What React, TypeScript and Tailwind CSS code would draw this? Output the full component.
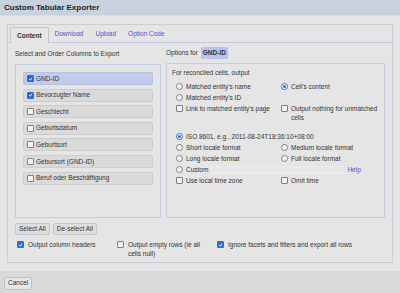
import React from "react";

type ColumnItem = { name: string; checked: boolean; selected?: boolean };

const columns: ColumnItem[] = [
  { name: "GND-ID", checked: true, selected: true },
  { name: "Bevorzugter Name", checked: true },
  { name: "Geschlecht", checked: false },
  { name: "Geburtsdatum", checked: false },
  { name: "Geburtsort", checked: false },
  { name: "Gebursort (GND-ID)", checked: false },
  { name: "Beruf oder Beschäftigung", checked: false },
];

function Check({ checked }: { checked?: boolean }) {
  return checked ? (
    <span className="w-[7px] h-[7px] shrink-0 rounded-[1px] bg-[#2f6bd3] border border-[#2f6bd3] flex items-center justify-center">
      <svg viewBox="0 0 10 10" className="w-[6px] h-[6px]">
        <path d="M2 5.2 L4.2 7.4 L8.2 2.6" fill="none" stroke="#fff" strokeWidth="1.8" />
      </svg>
    </span>
  ) : (
    <span className="block w-[7px] h-[7px] shrink-0 rounded-[1px] bg-[#f4f4f4] border border-[#808080]" />
  );
}

function Radio({ checked }: { checked?: boolean }) {
  return checked ? (
    <span className="w-[7px] h-[7px] shrink-0 rounded-full bg-white border border-[#2f6bd3] flex items-center justify-center">
      <span className="block w-[3px] h-[3px] rounded-full bg-[#2f6bd3]" />
    </span>
  ) : (
    <span className="block w-[7px] h-[7px] shrink-0 rounded-full bg-[#f4f4f4] border border-[#808080]" />
  );
}

function Opt({ kind, checked, children }: { kind: "radio" | "check"; checked?: boolean; children: React.ReactNode }) {
  return (
    <div className="flex items-start gap-[3px] h-[11px]">
      <span className="flex mt-[1px]">{kind === "radio" ? <Radio checked={checked} /> : <Check checked={checked} />}</span>
      <span className="leading-[9px]">{children}</span>
    </div>
  );
}

export default function App() {
  return (
    <div className="w-[400px] h-[293px] bg-[#e5e5e5] flex flex-col text-[6.5px] text-[#333] font-['Liberation_Sans',Arial,sans-serif] overflow-hidden">
      <div className="h-[16px] bg-[#c8d2de] px-[4px] flex items-center border-b border-[#d6dce6]">
        <span className="text-[8px] font-bold text-[#222]">Custom Tabular Exporter</span>
      </div>

      <div className="flex-1 px-[7px] pt-[8px] pb-[8px]">
        <div className="h-full border border-[#c9ccdc] flex flex-col">
          <div className="h-[18px] flex items-end pl-[2px] border-b border-[#c4c8de]">
            <div className="h-[16px] px-[6px] flex items-center border border-b-0 border-[#c6c6c6] bg-[#e5e5e5] font-bold -mb-px">Content</div>
            <div className="h-[16px] px-[6px] flex items-center text-[#5a4fc8]">Download</div>
            <div className="h-[16px] px-[6px] flex items-center text-[#5a4fc8]">Upload</div>
            <div className="h-[16px] px-[6px] flex items-center text-[#5a4fc8]">Option Code</div>
          </div>

          <div className="flex-1 px-[7px] flex flex-col">
            <div className="flex gap-[5px]">
              <div className="w-[146px] flex flex-col">
                <div className="h-[21px] flex items-center">Select and Order Columns to Export</div>
                <div className="h-[154px] border border-[#c7cbe2] px-[7px] pt-[7px] flex flex-col gap-[3.6px]">
                  {columns.map((c) => (
                    <div
                      key={c.name}
                      className={
                        c.selected
                          ? "h-[13px] rounded-[2px] bg-[#c3cbea] border border-[#b9c1e0] flex items-center gap-[2px] pl-[3px]"
                          : "h-[13px] rounded-[2px] bg-[#dadada] border border-[#cdcdcd] flex items-center gap-[2px] pl-[3px]"
                      }
                    >
                      <Check checked={c.checked} />
                      <span>{c.name}</span>
                    </div>
                  ))}
                </div>
              </div>

              <div className="flex-1 flex flex-col">
                <div className="h-[20px] flex items-center gap-[3px]">
                  <span>Options for</span>
                  <span className="bg-[#b8c2ea] font-bold px-[2px] py-[1px] rounded-[1px]">GND-ID</span>
                </div>
                <div className="h-[155px] border border-[#c7cbe2] px-[5px] pt-[4px]">
                  <div className="h-[10px] flex items-center">For reconciled cells, output</div>
                  <div className="ml-[4px] mt-[4px] grid grid-cols-[105px_1fr]">
                    <Opt kind="radio">Matched entity's name</Opt>
                    <Opt kind="radio" checked>Cell's content</Opt>
                    <Opt kind="radio">Matched entity's ID</Opt>
                    <div />
                    <Opt kind="check">Link to matched entity's page</Opt>
                    <div className="flex items-start gap-[3px]">
                      <span className="flex mt-[1px]"><Check /></span>
                      <span className="leading-[9px]">Output nothing for unmatched<br />cells</span>
                    </div>
                  </div>
                  <div className="ml-[4px] mt-[10px] grid grid-cols-[105px_1fr]">
                    <div className="col-span-2">
                      <Opt kind="radio" checked>ISO 8601, e.g., 2011-08-24T18:36:10+08:00</Opt>
                    </div>
                    <Opt kind="radio">Short locale format</Opt>
                    <Opt kind="radio">Medium locale format</Opt>
                    <Opt kind="radio">Long locale format</Opt>
                    <Opt kind="radio">Full locale format</Opt>
                    <div className="col-span-2 flex items-start h-[11px]">
                      <Opt kind="radio">Custom</Opt>
                      <div className="ml-[3px] mt-[1px] w-[132px] h-[8px] bg-[#e9e9e9] border-b border-[#f3f3f3]" />
                      <span className="ml-[4px] leading-[9px] text-[#5a4fc8]">Help</span>
                    </div>
                    <Opt kind="check">Use local time zone</Opt>
                    <Opt kind="check">Omit time</Opt>
                  </div>
                </div>
              </div>
            </div>

            <div className="mt-[5px] flex gap-[3px]">
              <button className="h-[12px] px-[3px] bg-[#dedede] border border-[#c6c6c6] rounded-[2px] leading-none">Select All</button>
              <button className="h-[12px] px-[3px] bg-[#dedede] border border-[#c6c6c6] rounded-[2px] leading-none">De-select All</button>
            </div>

            <div className="mt-[5px] ml-[2px] grid grid-cols-[100px_100px_1fr]">
              <div className="flex items-start gap-[4px]">
                <span className="flex mt-[1px]"><Check checked /></span>
                <span className="leading-[9px]">Output column headers</span>
              </div>
              <div className="flex items-start gap-[4px]">
                <span className="flex mt-[1px]"><Check /></span>
                <span className="leading-[9px]">Output empty rows (ie all<br />cells null)</span>
              </div>
              <div className="flex items-start gap-[4px]">
                <span className="flex mt-[1px]"><Check checked /></span>
                <span className="leading-[9px]">Ignore facets and filters and export all rows</span>
              </div>
            </div>
          </div>
        </div>
      </div>

      <div className="h-[22px] bg-[#d9d9d9] px-[4px] pt-[6px]">
        <button className="h-[13px] px-[3px] bg-[#e6e6e6] border border-[#c2c2c2] rounded-[2px] leading-none">Cancel</button>
      </div>
    </div>
  );
}
